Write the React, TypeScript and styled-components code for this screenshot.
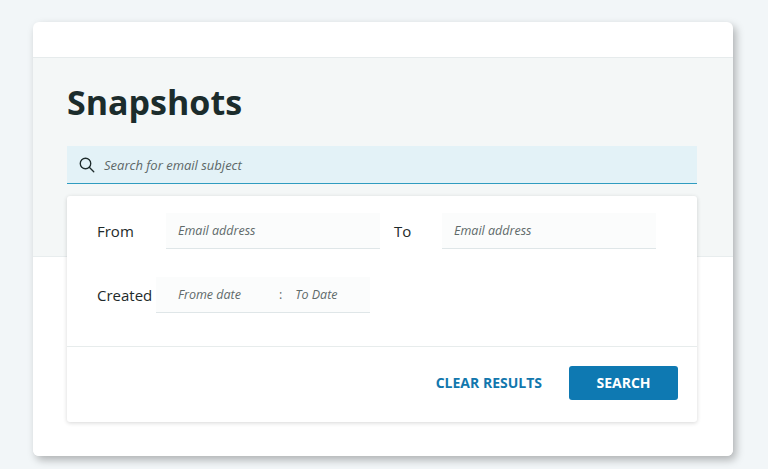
import React from 'react';
import styled, { createGlobalStyle } from 'styled-components';

const GlobalStyle = createGlobalStyle`
  body {
    margin: 0;
    background: #f2f6f8;
    font-family: 'Open Sans', sans-serif;
  }
`;

export default function App() {
  return (
    <>
      <GlobalStyle />
      <Page>
        <Card>
          <CardHeader />
          <Hero>
            <Title>Snapshots</Title>
            <SearchBar>
              <svg width="18" height="18" viewBox="0 0 24 24" fill="none" stroke="#1f2d2d" strokeWidth="1.8">
                <circle cx="10" cy="10" r="7" />
                <path d="M15 15l6 6" strokeLinecap="round" />
              </svg>
              <SearchText>Search for email subject</SearchText>
            </SearchBar>
            <Panel>
              <PanelBody>
                <Row>
                  <Label $width={69}>From</Label>
                  <Field $width={214}><Hint>Email address</Hint></Field>
                  <Label $width={48} $gap={14}>To</Label>
                  <Field $width={214}><Hint>Email address</Hint></Field>
                </Row>
                <Row>
                  <Label $width={59}>Created</Label>
                  <Field $width={214} $inset={22}>
                    <Hint>Frome date</Hint>
                    <Colon>:</Colon>
                    <Hint>To Date</Hint>
                  </Field>
                </Row>
              </PanelBody>
              <Footer>
                <TextButton>CLEAR RESULTS</TextButton>
                <PrimaryButton>SEARCH</PrimaryButton>
              </Footer>
            </Panel>
          </Hero>
        </Card>
      </Page>
    </>
  );
}

const Page = styled.div`
  padding: 22px 35px 13px 33px;
`;

const Card = styled.div`
  width: 700px;
  background: #fff;
  border-radius: 6px;
  box-shadow: 3px 4px 8px rgba(0, 0, 0, 0.28);
  overflow: hidden;
`;

const CardHeader = styled.div`
  height: 35px;
  border-bottom: 1px solid #e6ebec;
`;

const Hero = styled.div`
  padding: 24px 36px 34px 34px;
  background: linear-gradient(to bottom, #f4f7f7 0, #f4f7f7 198px, #e8edee 198px, #e8edee 199px, #fff 199px);
`;

const Title = styled.h1`
  margin: 0;
  font-size: 34px;
  line-height: 40px;
  font-weight: 700;
  color: #1b2c2c;
`;

const SearchBar = styled.div`
  margin-top: 24px;
  height: 37px;
  background: #e3f2f7;
  border-bottom: 1px solid #2f9cc0;
  display: flex;
  align-items: center;
  gap: 8px;
  padding-left: 11px;
`;

const SearchText = styled.span`
  font-style: italic;
  font-size: 13px;
  color: #5d6868;
`;

const Panel = styled.div`
  margin-top: 12px;
  background: #fff;
  border-radius: 3px;
  box-shadow: 0 1px 4px rgba(0, 0, 0, 0.16);
`;

const PanelBody = styled.div`
  padding: 17px 30px 33px;
  display: flex;
  flex-direction: column;
  gap: 28px;
  border-bottom: 1px solid #e7ecec;
`;

const Row = styled.div`
  display: flex;
  align-items: center;
`;

const Label = styled.span<{ $width: number; $gap?: number }>`
  min-width: ${(p) => p.$width}px;
  margin-left: ${(p) => p.$gap || 0}px;
  font-size: 15px;
  font-weight: 500;
  color: #1e2a2a;
`;

const Field = styled.div<{ $width: number; $inset?: number }>`
  width: ${(p) => p.$width}px;
  height: 36px;
  box-sizing: border-box;
  background: #fbfcfc;
  border-bottom: 1px solid #dfe6e8;
  display: flex;
  align-items: center;
  padding-left: ${(p) => p.$inset || 12}px;
`;

const Hint = styled.span`
  font-style: italic;
  font-size: 12.5px;
  color: #606a6a;
`;

const Colon = styled.span`
  margin: 0 13px 0 38px;
  font-size: 12.5px;
  color: #606a6a;
`;

const Footer = styled.div`
  height: 71px;
  padding-bottom: 4px;
  display: flex;
  align-items: center;
  justify-content: flex-end;
  gap: 27px;
  padding-right: 19px;
`;

const TextButton = styled.button`
  border: none;
  background: none;
  padding: 0;
  font-family: inherit;
  font-size: 14px;
  font-weight: 700;
  color: #1277ad;
`;

const PrimaryButton = styled.button`
  width: 109px;
  height: 34px;
  border: none;
  border-radius: 3px;
  background: #0e79b2;
  color: #fff;
  font-family: inherit;
  font-size: 14px;
  font-weight: 700;
`;
